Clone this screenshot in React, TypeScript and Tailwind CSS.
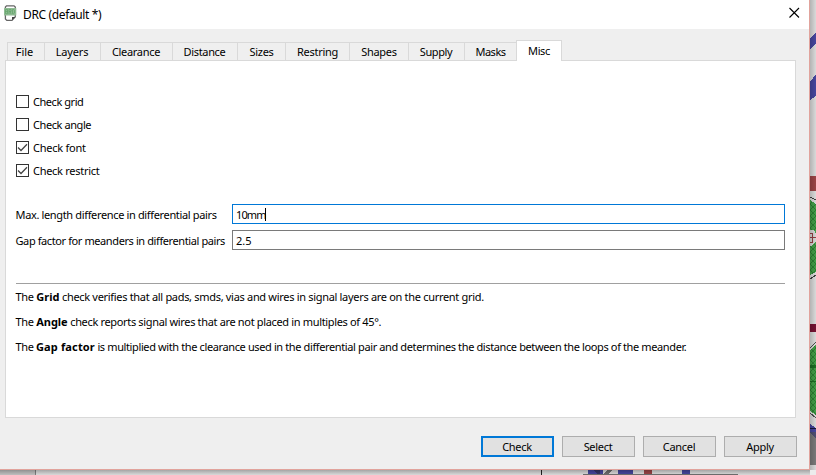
import React from "react";

const tabs = [
  { label: "File", box: "w-[37px] pr-[3px]", text: "tracking-[0px]" },
  { label: "Layers", box: "w-[56px] pr-px", text: "tracking-[-0.15px]" },
  { label: "Clearance", box: "w-[72px] pr-px", text: "tracking-[-0.3px]" },
  { label: "Distance", box: "w-[65px] pr-px", text: "tracking-[-0.35px]" },
  { label: "Sizes", box: "w-[48px]", text: "tracking-[-0.3px]" },
  { label: "Restring", box: "w-[64px]", text: "tracking-[-0.25px]" },
  { label: "Shapes", box: "w-[59px]", text: "tracking-[-0.3px]" },
  { label: "Supply", box: "w-[56px] pr-px", text: "tracking-[-0.4px]" },
  { label: "Masks", box: "w-[52px]", text: "tracking-[-0.5px]" },
];

const checks = [
  { label: "Check grid", on: false, text: "tracking-[-0.45px]" },
  { label: "Check angle", on: false, text: "tracking-[-0.42px]" },
  { label: "Check font", on: true, text: "tracking-[-0.25px]" },
  { label: "Check restrict", on: true, text: "tracking-[-0.28px]" },
];

function BoardBackdrop() {
  return (
    <svg className="absolute inset-0" width="816" height="475" viewBox="0 0 816 475" shapeRendering="crispEdges">
      <defs>
        <linearGradient id="sideShade" x1="0" x2="1">
          <stop offset="0" stopColor="#000" stopOpacity="0.24" />
          <stop offset="1" stopColor="#000" stopOpacity="0.08" />
        </linearGradient>
        <linearGradient id="lowShade" x1="0" x2="0" y1="0" y2="1">
          <stop offset="0" stopColor="#000" stopOpacity="0.3" />
          <stop offset="1" stopColor="#000" stopOpacity="0.08" />
        </linearGradient>
        <pattern id="hatch" width="6" height="6" patternUnits="userSpaceOnUse">
          <rect width="6" height="6" fill="#48ac4e" />
          <path d="M0 0L6 6M6 0L0 6" stroke="#2f8a38" strokeWidth="1" />
        </pattern>
      </defs>
      <rect width="816" height="475" fill="#ececec" />
      <path d="M810 38L816 32V43L810 49ZM810 82L816 74V96L810 100Z" fill="#4c4cab" />
      <rect x="810" y="176" width="6" height="15" fill="#a84a4c" />
      <path d="M810 200L816 204V272L810 275Z" fill="url(#hatch)" />
      <path d="M810 197L816 200M810 279L816 275" stroke="#444" fill="none" />
      <path d="M810 230L814 230L816 234V241L812 246H810Z" fill="#e8e8e8" />
      <path d="M810 233H812V242H810M810 237H816" stroke="#a04448" fill="none" />
      <rect x="810" y="324" width="6" height="8" fill="#801438" />
      <path d="M810 350L816 344V415L810 411Z" fill="url(#hatch)" />
      <path d="M810 365H816V368H810ZM810 381H816V382H810Z" fill="#1d7627" />
      <path d="M810 348L816 342M810 413L816 418" stroke="#555" fill="none" />
      <path d="M810 424L816 428V432H810Z" fill="#4c4cab" />
      <path d="M810 432L816 439V465H810Z" fill="#838383" />
      <path d="M810 432H816V439Z" fill="#55557a" />
      <path d="M810 428H816V429H810Z" fill="#191940" />
      <rect x="810" width="6" height="470" fill="url(#sideShade)" />
      <rect y="470" width="35" height="5" fill="#cfcfcf" />
      <rect x="35" y="470" width="1" height="5" fill="#888" />
      <rect x="541" y="470" width="1" height="5" fill="#222" />
      <path d="M588 470H603V474H588ZM618 470H633V474H618ZM682 470H690V474H682Z" fill="#4c4cab" />
      <path d="M593 470H600V474H597Z" fill="#3a3a70" />
      <path d="M604 474L607 470H612L608 474ZM583 474H738V475H583Z" fill="#777" />
      <rect x="644" y="470" width="8" height="4" fill="#a84a4c" />
      <rect y="470" width="810" height="5" fill="url(#lowShade)" />
    </svg>
  );
}

function BoardIcon() {
  return (
    <svg width="13" height="17" viewBox="0 0 13 17" className="shrink-0">
      <path d="M2.5 .8H10L11.3 2V11.8L8 15.4H2.8L1.4 14V2Z" fill="#fff" stroke="#666" strokeWidth="1.3" />
      <path d="M8 15V12H11.5Z" fill="#444" />
      <rect x="0" y="3" width="12.3" height="7.5" rx=".6" fill="#8fba93" />
      <path d="M1.5 8.7V4.5H3.5V8.7H1.5M1.5 6.5H3.5M5 9V4.5H7V6.5H5M6 6.5L7 9M8.5 8.7V4.5H9.7L10.5 5.5V8L9.7 8.7Z" fill="none" stroke="#60a567" strokeWidth=".7" />
    </svg>
  );
}

function CheckRow({ label, on, text }: { label: string; on: boolean; text: string }) {
  return (
    <label className="flex h-[23px] items-center">
      <span className="h-[13px] w-[13px] shrink-0 border border-[#333] bg-white">
        {on && (
          <svg width="11" height="11" viewBox="0 0 11 11">
            <path d="M1 5.5L4 8.5L10 2.2" fill="none" stroke="#444" strokeWidth="1.3" />
          </svg>
        )}
      </span>
      <span className={`ml-1 ${text}`}>{label}</span>
    </label>
  );
}

export default function App() {
  return (
    <div className="relative h-[475px] w-[816px] overflow-hidden font-['Noto_Sans',sans-serif] text-[11px] leading-[15px] whitespace-nowrap text-black">
      <BoardBackdrop />
      <main className="relative flex h-[470px] w-[810px] flex-col border-r border-b border-[#e1a39c] bg-[#efefef]">
        <header className="flex h-[29px] shrink-0 items-center bg-white pr-[9px] pb-[3px] pl-[4px]">
          <BoardIcon />
          <h1 className="mt-[2px] ml-[6px] text-[12px] tracking-[-0.36px]">DRC (default *)</h1>
          <svg className="ml-auto" width="12" height="12" viewBox="0 0 12 12">
            <path d="M1.5 1L11 10.5M11 1L1.5 10.5" stroke="#000" strokeWidth="1.1" />
          </svg>
        </header>

        <nav className="z-10 mt-[11px] -mb-px flex h-[21px] shrink-0 items-end pl-[7px]">
          {tabs.map((t) => (
            <div key={t.label} className={`${t.box} flex h-[19px] items-center justify-center border-y border-l border-[#d9d9d9] pb-px`}>
              <span className={t.text}>{t.label}</span>
            </div>
          ))}
          <div className="flex h-[21px] w-[46px] items-center justify-center border-x border-t border-[#d9d9d9] bg-white pb-px">
            <span className="tracking-[-0.4px]">Misc</span>
          </div>
        </nav>

        <section className="ml-[5px] flex h-[358px] w-[791px] shrink-0 flex-col border border-[#d9d9d9] bg-white pl-[10px]">
          <div className="mt-[29px] flex flex-col">
            {checks.map((c) => (
              <CheckRow key={c.label} label={c.label} on={c.on} text={c.text} />
            ))}
          </div>
          <div className="mt-[22px] flex h-5 items-center">
            <span className="-ml-[0.5px] w-[216.5px] tracking-[-0.35px]">Max. length difference in differential pairs</span>
            <div className="flex h-5 w-[553px] items-center border border-[#0078d7] pl-[3px]">
              <span className="tracking-[-0.9px]">10mm</span>
              <span className="-ml-px h-[13px] w-px bg-black" />
            </div>
          </div>
          <div className="mt-[6px] flex h-5 items-center">
            <span className="-ml-[0.5px] w-[216.5px] tracking-[-0.4px]">Gap factor for meanders in differential pairs</span>
            <div className="flex h-5 w-[553px] items-center border border-[#7a7a7a] pl-[3px]">2.5</div>
          </div>
          <hr className="mt-[33px] w-[769px] border-t border-[#a0a0a0]" />
          <p className="-ml-[0.5px] mt-[5px] tracking-[-0.31px]">The <b className="tracking-[0px]">Grid</b> check verifies that all pads, smds, vias and wires in signal layers are on the current grid.</p>
          <p className="-ml-[0.5px] mt-[10px] tracking-[-0.34px]">The <b className="tracking-[0px]">Angle</b> check reports signal wires that are not placed in multiples of 45°.</p>
          <p className="-ml-[0.5px] mt-[10px] tracking-[-0.38px]">The <b className="tracking-[0.15px]">Gap factor</b> is multiplied with the clearance used in the differential pair and determines the distance between the loops of the meander.</p>
        </section>

        <footer className="mt-[18px] flex gap-2 pl-[481px] tracking-[-0.3px]">
          <button className="h-[21px] w-[73px] border-2 border-[#0078d7] bg-[#e1e1e1] pr-px leading-[17px]">Check</button>
          <button className="h-[21px] w-[73px] border border-[#adadad] bg-[#e1e1e1] pr-px leading-[19px]">Select</button>
          <button className="h-[21px] w-[73px] border border-[#adadad] bg-[#e1e1e1] pr-px leading-[19px]">Cancel</button>
          <button className="h-[21px] w-[73px] border border-[#adadad] bg-[#e1e1e1] pr-px leading-[19px]">Apply</button>
        </footer>
      </main>
    </div>
  );
}
